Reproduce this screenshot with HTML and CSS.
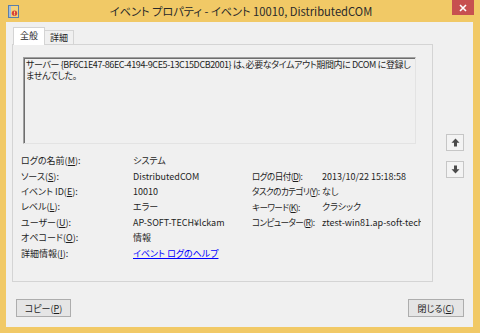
FILE: index.html
```html
<!DOCTYPE html>
<html lang="ja">
<head>
  <meta charset="UTF-8" />
  <meta name="viewport" content="width=device-width, initial-scale=1" />
  <title>イベント プロパティ</title>
  <link rel="stylesheet" href="styles.css">
</head>
<body>
  <div class="window">
    <div class="titlebar">
      <svg class="app-icon" width="11" height="13" viewBox="0 0 11 13">
        <rect x="0.5" y="0.5" width="10" height="12" fill="#f3d27a" stroke="#5b7fa8" />
        <rect x="1" y="1" width="2" height="11" fill="#9fbbdc" />
        <circle cx="6.5" cy="8.3" r="2.7" fill="#d8433b" />
        <rect x="6" y="6.4" width="1" height="2.2" fill="#ffe27a" />
        <rect x="6" y="9.3" width="1" height="1" fill="#ffe27a" />
      </svg>
      <div class="title">イベント プロパティ - イベント 10010, DistributedCOM</div>
      <div class="close">
        <svg width="8" height="8" viewBox="0 0 8 8">
          <path d="M1 1 L7 7 M7 1 L1 7" stroke="#fff" stroke-width="1.6" />
        </svg>
      </div>
    </div>

    <div class="client">
      <div class="main">
        <div class="tab-area">
          <div class="tabs">
            <div class="tab active">全般</div>
            <div class="tab">詳細</div>
          </div>
          <div class="panel">
            <div class="message">サーバー {BF6C1E47-86EC-4194-9CE5-13C15DCB2001} は、必要なタイムアウト期間内に DCOM に登録しませんでした。</div>

            <div class="fields">
              <span>ログの名前(<u>M</u>):</span><span>システム</span><span></span><span></span>
              <span>ソース(<u>S</u>):</span><span>DistributedCOM</span><span class="label2">ログの日付(<u>D</u>):</span><span class="value2">2013/10/22 15:18:58</span>
              <span>イベント ID(<u>E</u>):</span><span>10010</span><span class="label2">タスクのカテゴリ(<u>Y</u>):</span><span class="value2">なし</span>
              <span>レベル(<u>L</u>):</span><span>エラー</span><span class="label2">キーワード(<u>K</u>):</span><span class="value2">クラシック</span>
              <span>ユーザー(<u>U</u>):</span><span>AP-SOFT-TECH¥lckam</span><span class="label2">コンピューター(<u>R</u>):</span><span class="value2">ztest-win81.ap-soft-tech.local</span>
              <span>オペコード(<u>O</u>):</span><span>情報</span><span></span><span></span>
              <span>詳細情報(<u>I</u>):</span><span><a class="link" href="#">イベント ログのヘルプ</a></span><span></span><span></span>
            </div>
          </div>
        </div>

        <div class="side">
          <div class="arrow-btn">
            <svg width="9" height="9" viewBox="0 0 9 9">
              <path d="M4.5 0.5 L8.5 4.8 L6 4.8 L6 8.5 L3 8.5 L3 4.8 L0.5 4.8 Z" fill="#4a4a4a" />
            </svg>
          </div>
          <div class="arrow-btn">
            <svg width="9" height="9" viewBox="0 0 9 9">
              <path d="M4.5 8.5 L8.5 4.2 L6 4.2 L6 0.5 L3 0.5 L3 4.2 L0.5 4.2 Z" fill="#4a4a4a" />
            </svg>
          </div>
        </div>
      </div>

      <div class="buttons">
        <button class="btn">コピー(<u>P</u>)</button>
        <button class="btn">閉じる(<u>C</u>)</button>
      </div>
    </div>
  </div>
</body>
</html>
```

FILE: styles.css
```css
* {
  box-sizing: border-box;
  font-family: "Noto Sans CJK JP", "Noto Sans", sans-serif;
  font-feature-settings: "palt";
}
body {
  margin: 0;
  background: #f1c966;
}
.window {
  width: 480px;
  height: 333px;
  background: #f1c966;
  display: flex;
  flex-direction: column;
}
.titlebar {
  height: 22px;
  display: grid;
  grid-template-columns: 1fr auto 1fr;
  align-items: start;
  padding: 0 6px 0 8px;
}
.app-icon {
  margin-top: 5px;
  justify-self: start;
}
.title {
  font-size: 11.2px;
  line-height: 22px;
  color: #2a2a2a;
  white-space: nowrap;
}
.close {
  justify-self: end;
  width: 22px;
  height: 15px;
  background: #c75050;
  display: flex;
  align-items: center;
  justify-content: center;
}
.client {
  margin: 0 7px 0 6px;
  height: 305px;
  background: #f0f0f0;
  padding: 5px 0 0 6px;
  font-size: 9px;
  color: #1e1e1e;
}
.main {
  display: flex;
  gap: 13px;
}
.tabs {
  display: flex;
  align-items: flex-end;
  height: 17px;
  padding-left: 1px;
}
.tab {
  height: 14px;
  padding: 0 5px;
  line-height: 13px;
  border: 1px solid #d4d4d4;
  border-bottom: none;
  margin-left: -1px;
  background: #f0f0f0;
}
.tab:first-child {
  margin-left: 0;
}
.tab.active {
  height: 18px;
  padding: 0 6px;
  line-height: 16px;
  margin-bottom: -1px;
  background: #fff;
  position: relative;
  z-index: 1;
}
.panel {
  width: 421px;
  height: 238px;
  border: 1px solid #d4d4d4;
  background: #f0f0f0;
  padding: 12px 11px 0 8px;
}
.message {
  width: 393px;
  height: 87px;
  margin-left: 2px;
  padding: 1px 0 1px 2px;
  line-height: 11px;
  letter-spacing: -0.4px;
  border: 1px solid;
  border-color: #a0a0a0 #e3e3e3 #e3e3e3 #a0a0a0;
  box-shadow: inset 1px 1px #6e6e6e;
}
.fields {
  margin-top: 9px;
  display: grid;
  grid-template-columns: 112px 119px 70px 1fr;
  grid-auto-rows: 15.4px;
  align-items: center;
  white-space: nowrap;
}
.fields .label2 {
  font-size: 8.6px;
  letter-spacing: -0.6px;
}
.fields .value2 {
  overflow: hidden;
}
.link {
  color: #0000ff;
}
.side {
  padding-top: 107px;
  display: flex;
  flex-direction: column;
  gap: 10px;
}
.arrow-btn {
  width: 18px;
  height: 17px;
  border: 1px solid #c6c6c6;
  background: #f3f3f3;
  display: flex;
  align-items: center;
  justify-content: center;
}
.buttons {
  margin-top: 17px;
  display: flex;
  justify-content: space-between;
  padding: 0 9px 0 4px;
}
.btn {
  width: 55px;
  height: 18px;
  padding: 0;
  border: 1px solid #adadad;
  background: #e5e5e5;
  font-size: 9px;
  color: #1e1e1e;
}
.btn:last-child {
  width: 56px;
}
```
